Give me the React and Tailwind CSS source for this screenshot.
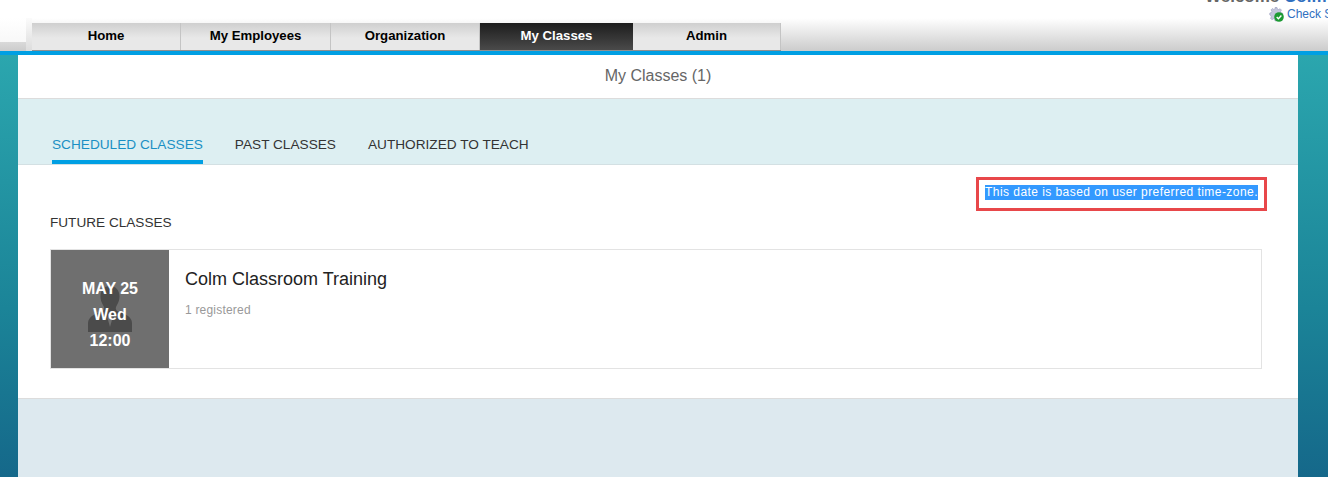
import React from 'react';

const navItems = [
  { label: 'Home', width: 'w-[149px]' },
  { label: 'My Employees', width: 'w-[150px]' },
  { label: 'Organization', width: 'w-[149px]' },
  { label: 'My Classes', width: 'w-[153px]', active: true },
  { label: 'Admin', width: 'w-[148px]' },
];

function CheckIcon() {
  return (
    <svg width="15" height="15" viewBox="0 0 15 15" className="shrink-0">
      <path d="M6 0.5h2l.4 1.6 1.3.5 1.4-.9 1.4 1.4-.9 1.4.5 1.3 1.6.4v2l-1.6.4-.5 1.3.9 1.4-1.4 1.4-1.4-.9-1.3.5-.4 1.6H6l-.4-1.6-1.3-.5-1.4.9-1.4-1.4.9-1.4-.5-1.3L.8 8V6l1.6-.4.5-1.3-.9-1.4 1.4-1.4 1.4.9 1.3-.5z" fill="#c3c6dc" stroke="#8a8fb5" strokeWidth="0.5" />
      <circle cx="10" cy="10" r="4.8" fill="#1c9a33" />
      <path d="M7.700 10l1.700 1.700 3-3.200" fill="none" stroke="#fff" strokeWidth="1.400" />
    </svg>
  );
}

function PersonIcon() {
  return (
    <svg width="44" height="46" viewBox="0 0 44 46" fill="#4b4b4b">
      <path d="M22 0c6 0 9.500 4.500 9.500 10.500 0 3-1 6-2.500 8.500-1 1.500-1.500 3-1 4.500l1 1.500c4 1.500 8 3 11 5 2 1.500 4 4 4 7V46H0v-9c0-3 2-5.500 4-7 3-2 7-3.500 11-5l1-1.500c.5-1.500 0-3-1-4.500-1.500-2.500-2.500-5.500-2.500-8.500C12.500 4.500 16 0 22 0z" />
      <path d="M20.500 28h3l1 4-2.500 9-2.500-9z" fill="#6f6f6f" />
    </svg>
  );
}

export default function App() {
  return (
    <div className="h-[477px] overflow-hidden bg-white font-['Liberation_Sans',Arial,sans-serif]">
      <header className="flex h-[55px] border-b-4 border-[#009fe3] bg-[linear-gradient(to_bottom,#ffffff_0px,#ffffff_18px,#cdcdcd_50px)]">
        <div className="mt-[18px] flex h-[33px] w-[32px] shrink-0">
          <div className="h-[24px] w-[26px] bg-[linear-gradient(to_bottom,#ffffff_0%,#f8f8f8_100%)]" />
          <div className="w-[6px] bg-[linear-gradient(to_bottom,#fbfbfb,#dcdcdc)]" />
        </div>
        <nav className="mt-[23px] flex h-[28px] w-[749px] shrink-0 border-b border-[#8f8f8f]">
          {navItems.map((item) => (
            <div
              key={item.label}
              className={
                item.active
                  ? `${item.width} flex items-center justify-center bg-[linear-gradient(to_bottom,#1d1d1d,#4a4a4a)] pb-px text-[13.2px] font-bold text-white`
                  : `${item.width} flex items-center justify-center border-r border-[#c4c4c4] bg-[linear-gradient(to_bottom,#cfcfcf,#e8e8e8_55%)] pb-px text-[13.2px] font-bold text-black`
              }
            >
              {item.label}
            </div>
          ))}
        </nav>
        <div className="ml-auto h-[30px] w-[123px] shrink-0 overflow-hidden">
          <div className="mt-[-11px] flex h-[16px] whitespace-nowrap text-[17px] font-bold leading-4 text-[#666]">
            <span>Welcome&nbsp;</span>
            <span className="text-[#2f6fc0]">Colm</span>
          </div>
          <div className="mt-[2px] ml-[64px] flex items-center gap-[3px] whitespace-nowrap text-xs leading-[15px] text-[#2f6fc0]">
            <CheckIcon />
            <span>Check System</span>
          </div>
        </div>
      </header>

      <div className="h-[422px] pl-[18px] pr-[30px] bg-[linear-gradient(to_bottom,#2ba6ae_0%,#1b8498_60%,#15688a_100%)]">
        <main className="flex h-full flex-col bg-[#dde9ef]">
          <h1 className="flex h-[44px] items-center justify-center border-b border-[#dcdcdc] bg-white pb-px text-base font-normal text-[#666]">
            My Classes (1)
          </h1>

          <div className="flex h-[66px] items-end gap-8 border-b border-[#d3e0e3] bg-[#ddeff2] pl-[34px]">
            <div className="flex h-[30px] items-start border-b-4 border-[#009fe3] pt-px text-[13.65px] text-[#1a8fc4]">SCHEDULED CLASSES</div>
            <div className="flex h-[30px] items-start pt-px text-[13.65px] text-[#333]">PAST CLASSES</div>
            <div className="flex h-[30px] items-start pt-px text-[13.65px] text-[#333]">AUTHORIZED TO TEACH</div>
          </div>

          <section className="h-[234px] border-b border-[#dcdcdc] bg-white pl-[32px] pr-[36px]">
            <div className="flex justify-end pt-[12px]">
              <div className="mr-[-5px] flex h-[34px] w-[291px] items-start justify-center border-[3px] border-[#e8474a] pt-[5px]">
                <span className="bg-[#3399ff] text-xs leading-[15px] tracking-[0.44px] whitespace-nowrap text-white">
                  This date is based on user preferred time-zone.
                </span>
              </div>
            </div>
            <h2 className="mt-[4px] text-[13.6px] leading-4 font-normal text-[#333]">FUTURE CLASSES</h2>
            <div className="mt-[18px] flex h-[120px] border border-[#e3e3e3] bg-white">
              <div className="relative flex w-[118px] shrink-0 flex-col items-center justify-center bg-[#6f6f6f] pt-[12px] text-base leading-[26px] font-bold text-white">
                <div className="absolute top-[36px] left-[37px]">
                  <PersonIcon />
                </div>
                <span className="relative">MAY 25</span>
                <span className="relative">Wed</span>
                <span className="relative">12:00</span>
              </div>
              <div className="pl-[16px] pt-[18px]">
                <div className="text-lg leading-[22px] text-[#222]">Colm Classroom Training</div>
                <div className="mt-[12px] text-xs tracking-[0.2px] text-[#999]">1 registered</div>
              </div>
            </div>
          </section>
        </main>
      </div>
    </div>
  );
}
